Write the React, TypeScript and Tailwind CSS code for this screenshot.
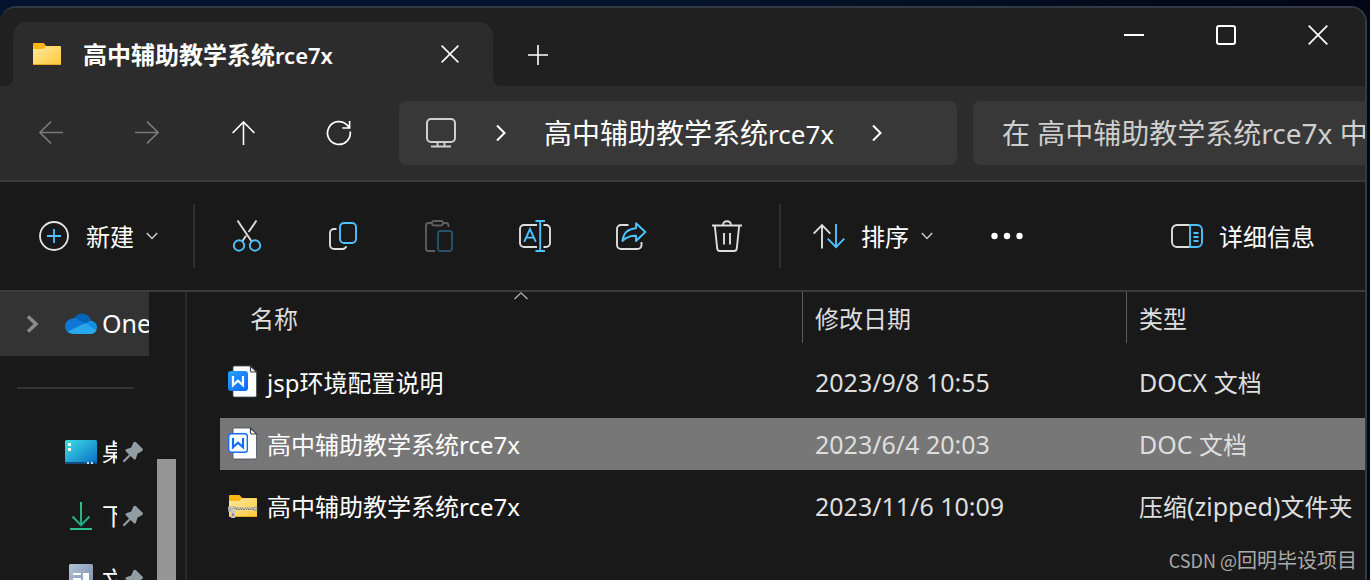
import React from 'react';

type IconProps = { className?: string };

const FolderIcon = ({ zipped = false, className = '' }: IconProps & { zipped?: boolean }) => (
  <svg className={className} viewBox="0 0 30 24" width="30" height="24" aria-hidden="true">
    <defs>
      <linearGradient id="folderFront" x1="0" y1="0" x2="1" y2="1">
        <stop offset="0" stopColor="#ffe9a0" />
        <stop offset="1" stopColor="#ffc93a" />
      </linearGradient>
    </defs>
    <path d="M1 2a1 1 0 0 1 1-1h8.500c1 0 1.500.4 2 1l1.700 2H28a1 1 0 0 1 1 1v6H1z" fill="#fbb615" />
    <path d="M1 7h9c1 0 1.500-.3 2-.8l1.300-1.400c.3-.4.7-.5 1.200-.5H28a1 1 0 0 1 1 1V22a1 1 0 0 1-1 1H2a1 1 0 0 1-1-1z" fill="url(#folderFront)" />
    <path d="M1 22.500h28" stroke="#e8a91c" />
    {zipped && (
      <g>
        <path d="M6 14.700h20" stroke="#e8dcb4" strokeWidth="3.400" />
        <path d="M7 14h19" stroke="#5f5b52" strokeWidth="1.100" strokeDasharray="1.200 1.200" />
        <path d="M8 15.400h18" stroke="#5f5b52" strokeWidth="1.100" strokeDasharray="1.200 1.200" />
        <path d="M26 13h3v3.500h-3z" fill="#c9c8c5" stroke="#8a877f" strokeWidth=".6" />
        <path d="M0 12.500h7v5H0z" fill="#a5a4a1" />
        <path d="M2.800 15h4.400v8a1 1 0 0 1-1 1H3.800a1 1 0 0 1-1-1z" fill="#c9c8c5" />
        <path d="M1 13.800h5" stroke="#d8d7d4" />
        <path d="M5 19.500v2.500" stroke="#6d6a66" strokeWidth="1.400" />
      </g>
    )}
  </svg>
);

const CloseIcon = ({ size }: { size: number }) => (
  <svg viewBox="0 0 20 20" width={size} height={size} fill="none" stroke="#fff" strokeWidth="1.700" aria-hidden="true">
    <path d="M.7.7l18.600 18.600M19.300.7L.7 19.300" />
  </svg>
);

const ArrowIcon = ({ className = '' }: IconProps) => (
  <svg className={className} viewBox="0 0 24 24" width="24" height="24" fill="none" stroke="currentColor" strokeWidth="1.600" aria-hidden="true">
    <path d="M24 11.500H1M12 .6L.9 11.500 12 22.400" />
  </svg>
);

const RefreshIcon = () => (
  <svg viewBox="0 0 26 26" width="26" height="26" fill="none" stroke="#fff" strokeWidth="1.700" aria-hidden="true">
    <path d="M24.200 11.500A11.400 11.400 0 1 1 21.200 5.200L23.600 7.800M23.600 1v7h-7.200" />
  </svg>
);

const ComputerIcon = () => (
  <svg viewBox="0 0 30 30" width="30" height="30" fill="none" stroke="#cfcfcf" strokeWidth="2" aria-hidden="true">
    <rect x="1" y="1" width="28" height="23" rx="4" />
    <path d="M11.500 24v4.500M18.500 24v4.500M5 28.500h20" />
  </svg>
);

const ChevronRight = () => (
  <svg viewBox="0 0 10 18" width="10" height="18" fill="none" stroke="#fff" strokeWidth="2" aria-hidden="true">
    <path d="M1 1.500L8.500 9 1 16.500" />
  </svg>
);

const ChevronDown = () => (
  <svg viewBox="0 0 12 8" width="12" height="8" fill="none" stroke="#c8c8c8" strokeWidth="1.500" aria-hidden="true">
    <path d="M.8 1L6 6.500 11.200 1" />
  </svg>
);

const NewIcon = () => (
  <svg viewBox="0 0 30 30" width="30" height="30" fill="none" strokeWidth="1.800" aria-hidden="true">
    <circle cx="15" cy="15" r="14" stroke="#e4e4e4" />
    <path d="M15 8v14M8 15h14" stroke="#4cc2ff" />
  </svg>
);

const CutIcon = () => (
  <svg viewBox="0 0 32 34" width="32" height="34" fill="none" strokeWidth="1.900" aria-hidden="true">
    <path d="M6.500 1.500L20.300 22M25.500 1.500L17.600 13M15 16.700L11.500 22" stroke="#dedede" />
    <circle cx="8" cy="26.500" r="5.200" stroke="#4cc2ff" />
    <circle cx="24" cy="26.500" r="5.200" stroke="#4cc2ff" />
  </svg>
);

const CopyIcon = () => (
  <svg viewBox="0 0 32 34" width="32" height="34" fill="none" strokeWidth="1.900" aria-hidden="true">
    <path d="M9.500 10H7a4 4 0 0 0-4 4v12a4 4 0 0 0 4 4h8.500a4 4 0 0 0 3.800-2.800" stroke="#dedede" />
    <rect x="13" y="4" width="16" height="20" rx="4" stroke="#4cc2ff" />
  </svg>
);

const PasteIcon = () => (
  <svg viewBox="0 0 32 34" width="32" height="34" fill="none" strokeWidth="1.900" aria-hidden="true">
    <path d="M9 4H5.500A2.500 2.500 0 0 0 3 6.500v23A2.500 2.500 0 0 0 5.500 32H12M20 4h3a2.500 2.500 0 0 1 2.500 2.500V8" stroke="#5e5e5e" />
    <rect x="9" y="2" width="11" height="4.500" rx="2.200" stroke="#5e5e5e" />
    <rect x="15" y="12" width="14" height="20" rx="2.500" stroke="#265369" />
  </svg>
);

const RenameIcon = () => (
  <svg viewBox="0 0 34 34" width="34" height="34" fill="none" strokeWidth="1.900" aria-hidden="true">
    <path d="M19 6H6a4 4 0 0 0-4 4v14a4 4 0 0 0 4 4h13M25.500 6H28a4 4 0 0 1 4 4v14a4 4 0 0 1-4 4h-2.500" stroke="#dedede" />
    <path d="M17.500 2h9.500M17.500 32h9.500M22.200 2v30" stroke="#4cc2ff" />
    <path d="M6.200 22.800L12 10l5.800 12.800M8.200 18.600h7.600" stroke="#4cc2ff" />
  </svg>
);

const ShareIcon = () => (
  <svg viewBox="0 0 32 34" width="32" height="34" fill="none" strokeWidth="1.900" aria-hidden="true">
    <path d="M13.500 6H6a4 4 0 0 0-4 4v16a4 4 0 0 0 4 4h16.500a4 4 0 0 0 4-4v-3" stroke="#dedede" />
    <path d="M21 4.300l9.300 8.700L21 22v-5.200c-6.200-.2-9.600 1.200-13.500 5.200C8.300 14.500 13 9.800 21 9.300z" stroke="#4cc2ff" strokeLinejoin="round" />
  </svg>
);

const TrashIcon = () => (
  <svg viewBox="0 0 32 34" width="32" height="34" fill="none" stroke="#dedede" strokeWidth="1.900" aria-hidden="true">
    <path d="M1 6.500h30M12 6a4 3.800 0 0 1 8 0M3.800 6.500l2.400 22.800A3 3 0 0 0 9.200 32h13.600a3 3 0 0 0 3-2.700l2.400-22.800M13 14v11.500M19 14v11.500" />
  </svg>
);

const SortIcon = () => (
  <svg viewBox="0 0 32 26" width="32" height="26" fill="none" strokeWidth="1.900" aria-hidden="true">
    <path d="M9 25.500V2M.7 10.600L9 2l8.300 8.600" stroke="#dedede" />
    <path d="M23 1v23M14.700 15.700L23 24.200l8.300-8.500" stroke="#4cc2ff" />
  </svg>
);

const DetailsIcon = () => (
  <svg viewBox="0 0 32 24" width="32" height="24" fill="none" strokeWidth="1.900" aria-hidden="true">
    <path d="M19 1H6a5 5 0 0 0-5 5v12a5 5 0 0 0 5 5h13" stroke="#dedede" />
    <path d="M19 1h7a5 5 0 0 1 5 5v12a5 5 0 0 1-5 5h-7zM22.500 9h5M22.500 13h5M22.500 17h5" stroke="#4cc2ff" />
  </svg>
);

const OneDriveIcon = () => (
  <svg viewBox="0 0 32 22" width="32" height="22" aria-hidden="true">
    <path d="M8 7C10 2.800 13 .5 16.800.5c4.600 0 8.200 3 9.200 7.300L18 13z" fill="#0364b8" />
    <path d="M8 5.500c2.200-.4 4 .2 5.500 1.200L21 11 4 20C1.500 18.500 0 16 0 13.300 0 9 3.500 5.600 8 5.500z" fill="#0f78d4" />
    <path d="M21 11c1.500-2 3-3.200 5-3.300 3.300.2 6 3.100 6 6.600 0 1.500-.4 2.800-1.200 4z" fill="#1490df" />
    <path d="M2.800 18.500L20.500 10l10.800 7.500c-1 2.300-3 3.500-5.300 3.500H8c-2 0-3.800-.9-5.200-2.500z" fill="#28a8ea" />
  </svg>
);

const DesktopIcon = () => (
  <svg viewBox="0 0 32 24" width="32" height="24" aria-hidden="true">
    <defs>
      <linearGradient id="desk" x1="0" y1="0" x2="1" y2="1">
        <stop offset="0" stopColor="#3bdfe6" />
        <stop offset="1" stopColor="#0b6cc4" />
      </linearGradient>
    </defs>
    <rect width="32" height="24" rx="1.500" fill="url(#desk)" />
    <path d="M0 22h32v.5a1.500 1.500 0 0 1-1.500 1.500h-29A1.500 1.500 0 0 1 0 22.500z" fill="#124f80" />
    <path d="M3 3h3v3H3zM3 8h3v3H3z" fill="#fff" />
    <path d="M22 22h2v2h-2zM26 22h2v2h-2z" fill="#c5dcee" />
  </svg>
);

const DownloadIcon = () => (
  <svg viewBox="0 0 32 28" width="32" height="28" fill="none" strokeWidth="2" aria-hidden="true">
    <defs>
      <linearGradient id="down" x1="0" y1="0" x2="0" y2="28" gradientUnits="userSpaceOnUse">
        <stop offset="0" stopColor="#35c481" />
        <stop offset="1" stopColor="#12a18b" />
      </linearGradient>
    </defs>
    <path d="M16 0v23M7.500 14.500L16 23.200l8.500-8.700" stroke="url(#down)" />
    <path d="M5 27h22" stroke="#2bbd8e" />
  </svg>
);

const DocumentsIcon = () => (
  <svg viewBox="0 0 32 32" width="32" height="32" aria-hidden="true">
    <defs>
      <linearGradient id="docs" x1="0" y1="0" x2="1" y2="1">
        <stop offset="0" stopColor="#b5c4d6" />
        <stop offset="1" stopColor="#6e86a8" />
      </linearGradient>
    </defs>
    <rect x="4" width="24" height="32" rx="1.500" fill="url(#docs)" />
    <path d="M8 9h8v2H8zM8 14h8v2H8zM18 9h6v7h-6zM8 19h16v2H8z" fill="#fff" />
  </svg>
);

const PinIcon = () => (
  <svg viewBox="0 0 22 22" width="22" height="22" aria-hidden="true">
    <path d="M11.500 1.300c.8-.8 1.800-.8 2.600 0l6.300 6.300c.8.8.7 1.900-.2 2.400l-4.700 2.700-1.700 5.200c-.3.900-1.200 1.100-1.900.4l-3.300-3.200-6 6H1v-1.600l6-6L3.800 10.200c-.7-.7-.4-1.600.4-1.900l5-1.800z" fill="#929ca3" />
  </svg>
);

const WordIcon = ({ filled }: { filled: boolean }) => (
  <svg viewBox="0 0 30 34" width="30" height="34" aria-hidden="true">
    <defs>
      <linearGradient id="badge" x1="0" y1="0" x2="1" y2="1">
        <stop offset="0" stopColor="#28a4ff" />
        <stop offset="1" stopColor="#0c63fa" />
      </linearGradient>
    </defs>
    <path d="M6.500 1h16l6 6v23.500a1.500 1.500 0 0 1-1.500 1.500H6.500A1.500 1.500 0 0 1 5 30.500v-28A1.500 1.500 0 0 1 6.500 1z" fill="#fcfdff" stroke="#454b57" strokeWidth=".8" />
    <path d="M22.500 1v4.500A1.500 1.500 0 0 0 24 7h4.500z" fill="#fff" stroke="#3a404b" strokeWidth="1.200" />
    {filled ? (
      <rect x="0" y="6" width="20" height="20" rx="3" fill="url(#badge)" />
    ) : (
      <rect x=".7" y="6.700" width="18.600" height="18.600" rx="2.500" fill="#fff" stroke="#176bff" strokeWidth="1.400" />
    )}
    <path d="M5 11v9.300l5-4.600 5 4.600V11" fill="none" stroke={filled ? '#fff' : '#176bff'} strokeWidth="2.200" />
  </svg>
);

const NAME = '高中辅助教学系统';

const files = [
  { icon: <WordIcon filled />, name: 'jsp环境配置说明', date: '2023/9/8 10:55', latin: 'DOCX ', type: '文档', prefix: '', selected: false },
  { icon: <WordIcon filled={false} />, name: NAME + 'rce7x', date: '2023/6/4 20:03', latin: 'DOC ', type: '文档', prefix: '', selected: true },
  { icon: <FolderIcon zipped />, name: NAME + 'rce7x', date: '2023/11/6 10:09', latin: '(zipped)', type: '文件夹', prefix: '压缩', selected: false },
];

const places = [
  { icon: <DesktopIcon />, name: '桌面' },
  { icon: <DownloadIcon />, name: '下载' },
  { icon: <DocumentsIcon />, name: '文档' },
];

const tools = [
  { label: '剪切', icon: <CutIcon /> },
  { label: '复制', icon: <CopyIcon /> },
  { label: '粘贴', icon: <PasteIcon />, disabled: true },
  { label: '重命名', icon: <RenameIcon /> },
  { label: '共享', icon: <ShareIcon /> },
  { label: '删除', icon: <TrashIcon /> },
];

function TitleBar() {
  return (
    <header className="flex h-[78px] shrink-0 items-end bg-[#202020] pl-[13px]">
      <div className="relative flex h-16 w-[480px] items-center rounded-t-[14px] bg-[#2c2c2c] pr-8 pl-[19px]">
        <span className="absolute bottom-0 -left-2 size-2 bg-[#2c2c2c]">
          <span className="block size-2 rounded-br-lg bg-[#202020]" />
        </span>
        <span className="absolute -right-2 bottom-0 size-2 bg-[#2c2c2c]">
          <span className="block size-2 rounded-bl-lg bg-[#202020]" />
        </span>
        <FolderIcon />
        <h1 className="ml-[21px] flex-1 pt-0.5 text-2xl font-bold text-white">
          {NAME}
          <span className="text-[22px] font-semibold">rce7x</span>
        </h1>
        <button aria-label="关闭标签页" className="p-0.5">
          <CloseIcon size={18} />
        </button>
      </div>
      <button aria-label="新建标签页" className="mb-[21px] ml-[35px]">
        <svg viewBox="0 0 20 20" width="20" height="20" stroke="#fff" strokeWidth="1.600" aria-hidden="true">
          <path d="M10 0v20M0 10h20" />
        </svg>
      </button>
      <div className="ml-auto flex items-center gap-[72px] self-start pt-[17px] pr-[37px]">
        <button aria-label="最小化" className="flex size-5 items-center">
          <svg viewBox="0 0 20 2" width="20" height="2" aria-hidden="true">
            <path d="M0 0h20v2H0z" fill="#fff" />
          </svg>
        </button>
        <button aria-label="最大化">
          <svg viewBox="0 0 20 20" width="20" height="20" fill="none" stroke="#fff" strokeWidth="2" aria-hidden="true">
            <rect x="1" y="1" width="18" height="18" rx="2" />
          </svg>
        </button>
        <button aria-label="关闭">
          <CloseIcon size={20} />
        </button>
      </div>
    </header>
  );
}

function NavBar() {
  return (
    <nav className="flex h-24 shrink-0 items-center border-b-2 border-[#3a3a3a] bg-[#2c2c2c]">
      <div className="flex items-center gap-[70px] pr-[47px] pl-[38px]">
        <button aria-label="后退" disabled className="flex w-[26px] justify-center text-[#7a7a7a]">
          <ArrowIcon />
        </button>
        <button aria-label="前进" disabled className="flex w-[26px] justify-center text-[#7a7a7a]">
          <ArrowIcon className="-scale-x-100" />
        </button>
        <button aria-label="上移" className="flex w-[26px] justify-center text-white">
          <ArrowIcon className="rotate-90" />
        </button>
        <button aria-label="刷新">
          <RefreshIcon />
        </button>
      </div>
      <div className="flex h-16 min-w-0 flex-1 items-center overflow-hidden rounded-lg bg-[#383838] pl-[27px]">
        <ComputerIcon />
        <span className="ml-10">
          <ChevronRight />
        </span>
        <button className="ml-[38px] text-[28px] leading-9 whitespace-nowrap text-white">
          {NAME}
          <span className="text-[26px]">rce7x</span>
        </button>
        <span className="ml-[38px]">
          <ChevronRight />
        </span>
      </div>
      <input
        type="text"
        aria-label="搜索"
        placeholder="在 高中辅助教学系统rce7x 中搜索"
        className="ml-4 h-16 w-[392px] shrink-0 rounded-l-lg bg-[#383838] pl-[29px] text-[28px] text-white outline-none placeholder:text-[#cfcfcf]"
      />
    </nav>
  );
}

function ToolBar() {
  return (
    <div role="toolbar" className="flex h-[110px] shrink-0 items-center border-b-2 border-[#3c3c3c] pr-[50px] pl-[39px] text-2xl text-white">
      <button className="flex items-center">
        <NewIcon />
        <span className="mr-3 ml-[17px] pt-0.5">新建</span>
        <ChevronDown />
      </button>
      <span className="ml-[35px] h-16 w-0.5 bg-[#2f2f2f]" />
      <div className="mx-9 flex">
        {tools.map((t) => (
          <button key={t.label} aria-label={t.label} disabled={t.disabled} className="flex w-24 justify-center first:-ml-8 last:-mr-8">
            {t.icon}
          </button>
        ))}
      </div>
      <span className="h-16 w-0.5 bg-[#2f2f2f]" />
      <button className="ml-8 flex items-center">
        <SortIcon />
        <span className="mr-3 ml-4 pt-0.5">排序</span>
        <ChevronDown />
      </button>
      <button aria-label="查看更多" className="ml-[58px]">
        <svg viewBox="0 0 32 8" width="32" height="8" fill="#fff" aria-hidden="true">
          <circle cx="3.500" cy="4" r="3.200" />
          <circle cx="16" cy="4" r="3.200" />
          <circle cx="28.500" cy="4" r="3.200" />
        </svg>
      </button>
      <button className="ml-auto flex items-center gap-4">
        <DetailsIcon />
        <span className="pt-0.5">详细信息</span>
      </button>
    </div>
  );
}

function Sidebar() {
  return (
    <aside className="flex w-[185px] shrink-0 gap-2 overflow-hidden">
      <ul className="w-[149px] shrink-0 text-2xl text-white">
        <li className="flex h-16 items-center overflow-hidden bg-[#333] pl-[26px]">
          <svg className="shrink-0" viewBox="0 0 14 20" width="14" height="20" fill="none" stroke="#8b8b8b" strokeWidth="3.500" aria-hidden="true">
            <path d="M2 2.500L10 10l-8 7.500" />
          </svg>
          <a href="#onedrive" className="ml-[25px] flex shrink-0 items-center gap-[5px]">
            <OneDriveIcon />
            <span className="text-[25px]">OneDrive</span>
          </a>
        </li>
        <li className="flex h-16 items-center pr-[15px] pl-[17px]">
          <hr className="w-full border-t-2 border-[#333]" />
        </li>
        {places.map((p) => (
          <li key={p.name} className="h-16">
            <a href="#place" className="flex h-16 items-center pl-[65px]">
              {p.icon}
              <span className="ml-[5px] w-[15px] overflow-hidden whitespace-nowrap">{p.name}</span>
              <span className="ml-[5px]">
                <PinIcon />
              </span>
            </a>
          </li>
        ))}
      </ul>
      <div className="mt-[167px] w-[19px] bg-[#959595]" />
    </aside>
  );
}

function FileTable() {
  return (
    <main className="min-w-0 flex-1 overflow-hidden border-l-2 border-[#2a2a2a] pl-[33px]">
      <table className="w-full table-fixed border-collapse text-left text-2xl text-[#dedede]">
        <colgroup>
          <col />
          <col className="w-[324px]" />
          <col className="w-[239px]" />
        </colgroup>
        <thead>
          <tr>
            <th className="p-0 pb-2 font-normal">
              <div className="relative flex h-[51px] items-center pt-0.5 pl-[30px]">
                名称
                <svg className="absolute top-0 left-[294px]" viewBox="0 0 14 8" width="14" height="8" fill="none" stroke="#b5b5b5" strokeWidth="1.200" aria-hidden="true">
                  <path d="M.5 7L7 .8 13.500 7" />
                </svg>
              </div>
            </th>
            <th className="p-0 pb-2 font-normal">
              <div className="flex h-[51px] items-center border-l border-[#5c5c5c] pt-0.5 pl-3">修改日期</div>
            </th>
            <th className="p-0 pb-2 font-normal">
              <div className="flex h-[51px] items-center border-l border-[#5c5c5c] pt-0.5 pl-3">类型</div>
            </th>
          </tr>
        </thead>
        <tbody>
          {files.map((f) => (
            <tr key={f.date}>
              <td className="px-0 py-[5px]">
                <div className={`flex h-[52px] items-center pl-2 text-white ${f.selected ? 'bg-[#777777]' : ''}`}>
                  <span className="w-[39px]">{f.icon}</span>
                  <span className="pt-0.5">{f.name}</span>
                </div>
              </td>
              <td className="px-0 py-[5px]">
                <div className={`flex h-[52px] items-center pt-0.5 pl-[13px] text-[25px] ${f.selected ? 'bg-[#777777]' : ''}`}>{f.date}</div>
              </td>
              <td className="px-0 py-[5px]">
                <div className={`h-[52px] pl-[13px] leading-[52px] whitespace-nowrap ${f.selected ? 'bg-[#777777]' : ''}`}>
                  {f.prefix}
                  <span className="text-[25px]">{f.latin}</span>
                  {f.type}
                </div>
              </td>
            </tr>
          ))}
        </tbody>
      </table>
    </main>
  );
}

export default function App() {
  return (
    <div className="relative flex h-screen flex-col overflow-hidden bg-linear-to-r from-[#03122e] via-[#04132c] to-[#010713] pt-1.5 pr-[3px] font-['Noto_Sans','Noto_Sans_CJK_SC',sans-serif]">
      <div className="flex min-h-0 flex-1 flex-col overflow-hidden rounded-t-[16px] border-t-2 border-r-2 border-[#333945] bg-[#191919]">
        <TitleBar />
        <NavBar />
        <ToolBar />
        <div className="flex min-h-0 flex-1">
          <Sidebar />
          <FileTable />
        </div>
      </div>
      <p className="absolute right-[13px] bottom-1.5 font-['Noto_Sans_CJK_SC',sans-serif] text-xl leading-7 text-[#a9a9a9]">
        <span className="text-lg">CSDN @</span>回明毕设项目
      </p>
    </div>
  );
}
